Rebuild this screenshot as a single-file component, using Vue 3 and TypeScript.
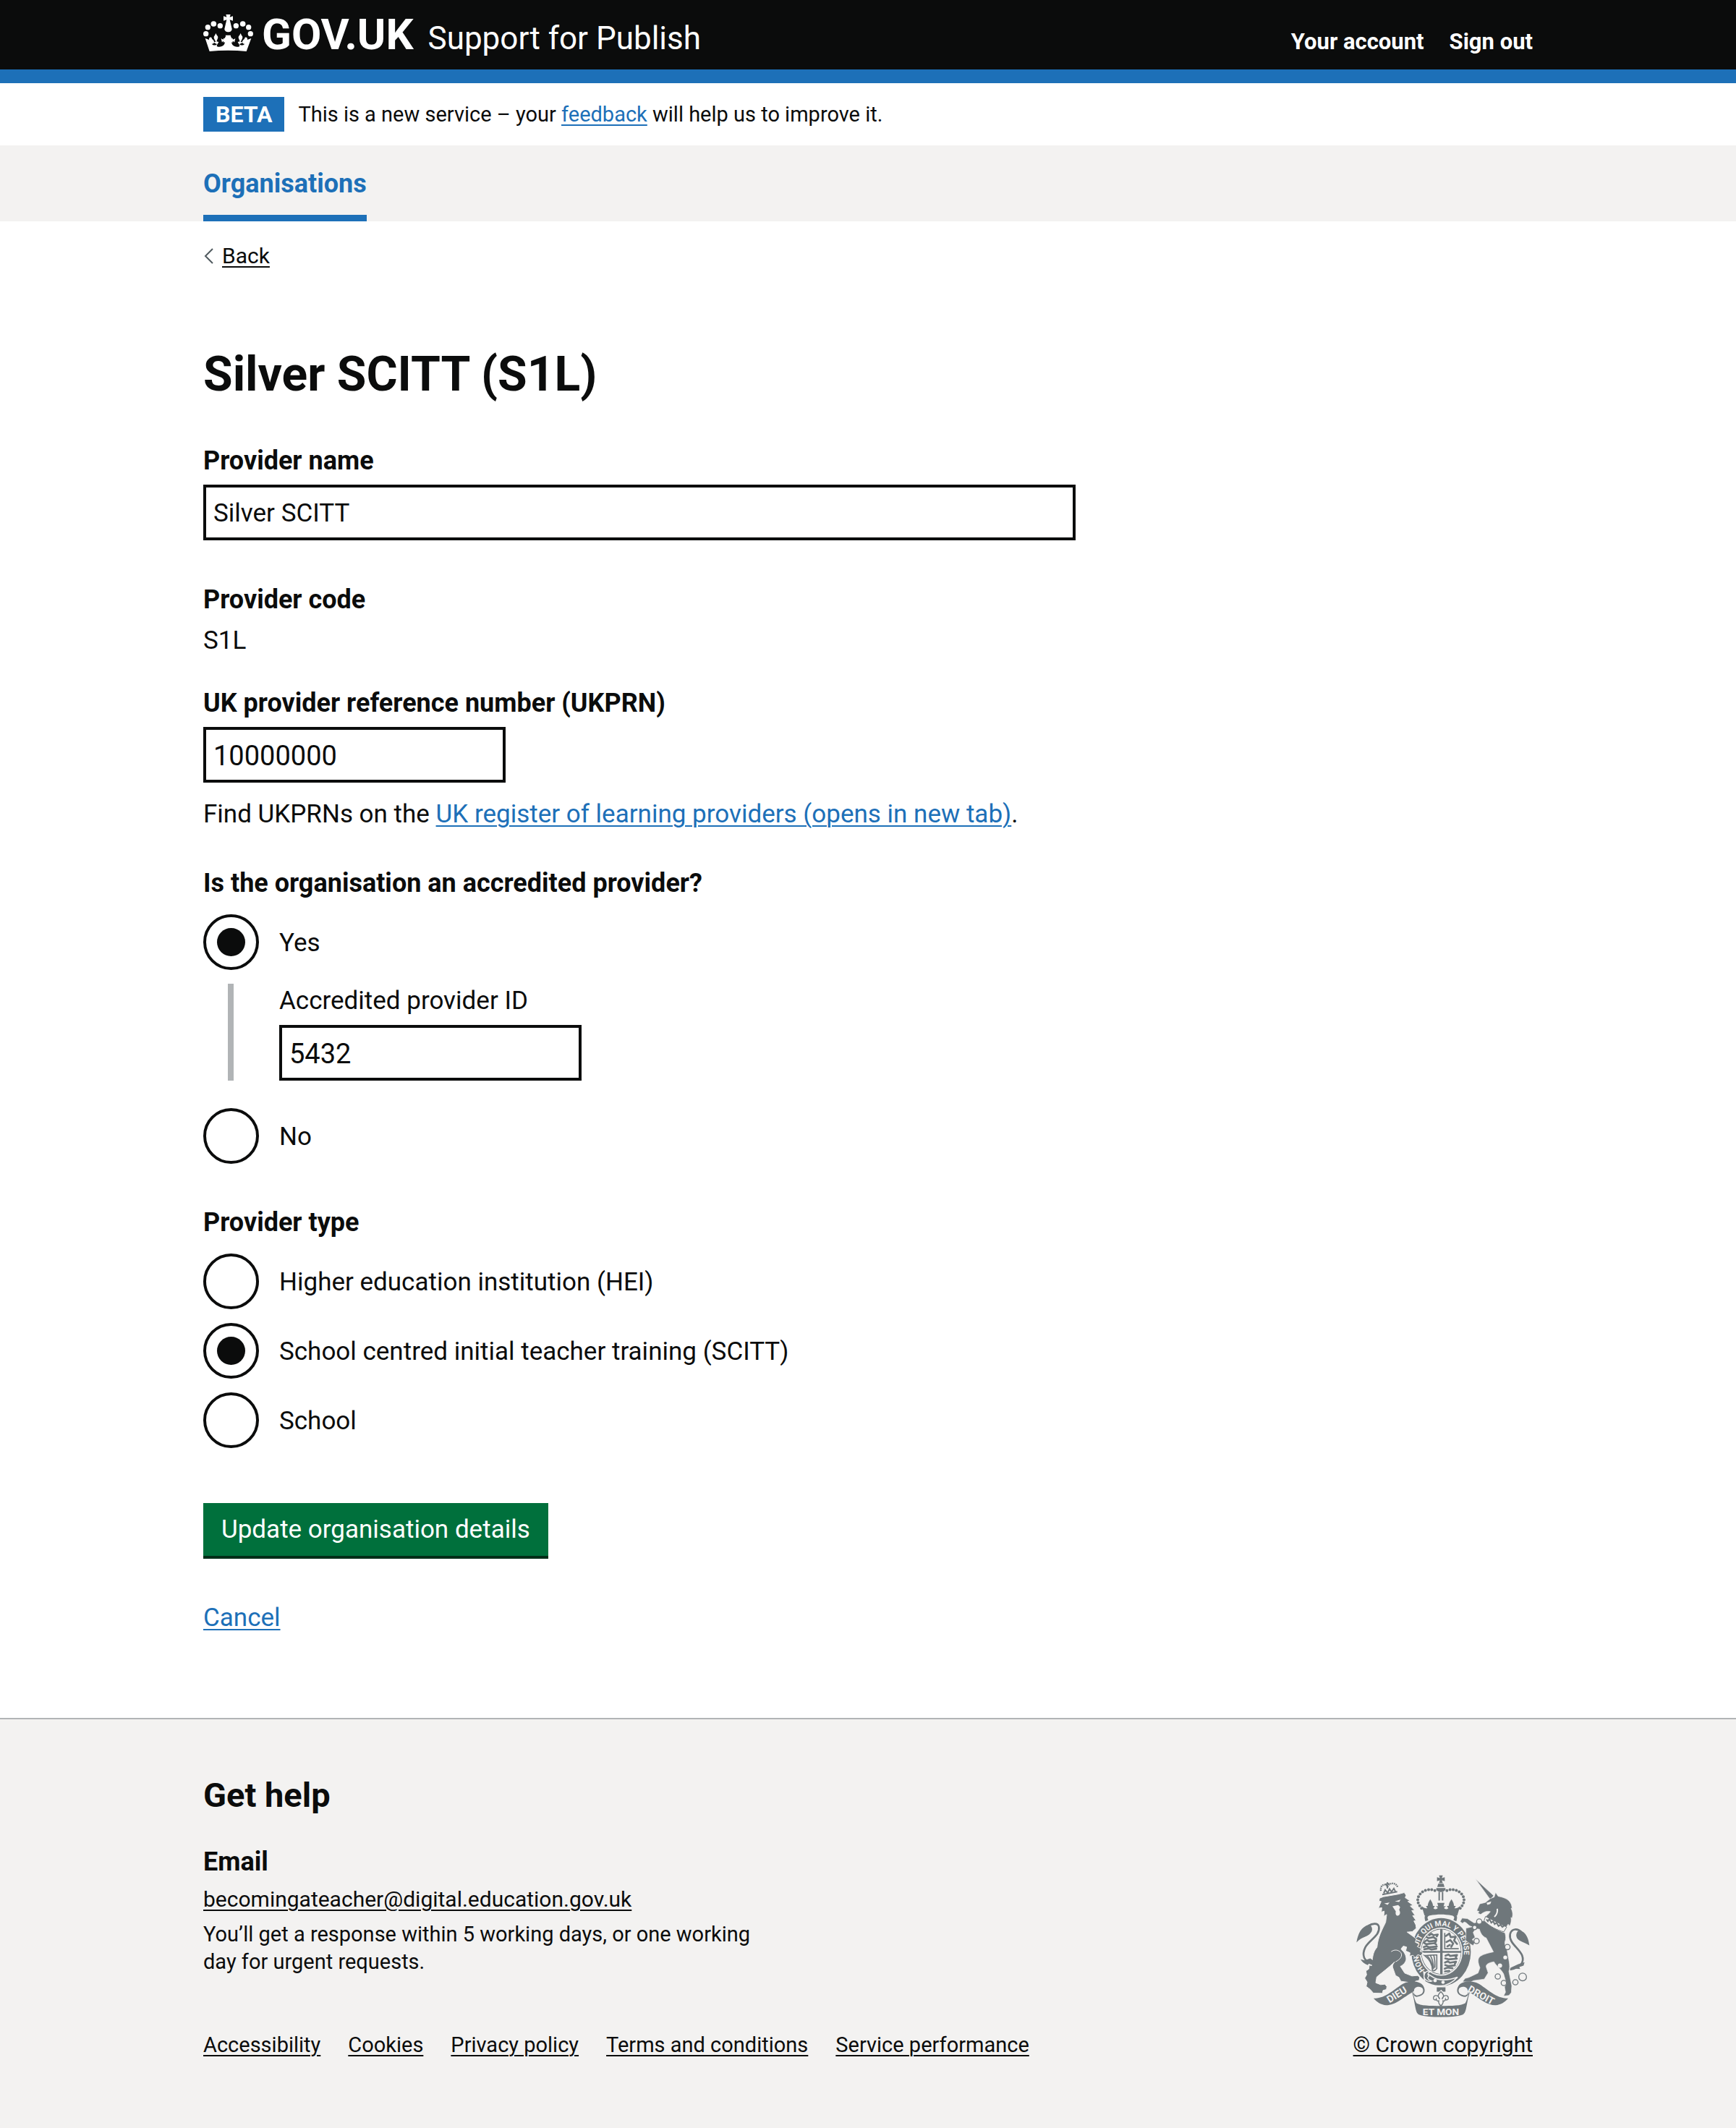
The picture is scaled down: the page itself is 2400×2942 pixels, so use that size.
<script setup lang="ts">
import { ref } from 'vue'

interface Option {
  value: string
  label: string
}

const providerName = ref('Silver SCITT')
const ukprn = ref('10000000')
const accredited = ref('yes')
const accreditedId = ref('5432')
const providerType = ref('scitt')

const providerTypes: Option[] = [
  { value: 'hei', label: 'Higher education institution (HEI)' },
  { value: 'scitt', label: 'School centred initial teacher training (SCITT)' },
  { value: 'school', label: 'School' }
]

const footerLinks = ['Accessibility', 'Cookies', 'Privacy policy', 'Terms and conditions', 'Service performance']

// Pearls along the arches of the crest's crown, one side; the other is mirrored about x = 377
const pearls: [number, number][] = [
  [352, 87], [339, 83], [326, 83], [313, 86], [301, 92], [291, 101], [284, 112], [281, 125], [283, 138], [289, 150], [297, 160]
]
const mirroredPearls = pearls.map(([x, y]) => [754 - x, y])
const crestPearls = [...pearls, ...mirroredPearls]

const chainRings: [number, number, number][] = [
  [536, 215, 11], [517, 240, 9], [525, 296, 11], [653, 321, 11], [613, 443, 11], [638, 470, 11], [686, 467, 11], [716, 445, 16]
]
</script>

<template>
  <div class="page">
    <header class="header">
      <div class="container header-row">
        <a class="logo" href="#">
          <svg class="crown" viewBox="0 0 207 153" aria-hidden="true">
            <g fill="#fff">
              <circle cx="11" cy="80" r="11" />
              <circle cx="19" cy="53" r="11" />
              <circle cx="43" cy="39" r="11.500" />
              <circle cx="70" cy="47" r="11" />
              <circle cx="196" cy="80" r="11" />
              <circle cx="188" cy="53" r="11" />
              <circle cx="164" cy="39" r="11.500" />
              <circle cx="136" cy="47" r="11" />
              <path d="M94 0h19l-3 11 13-4v19l-13-4 9 38c0 8-7 13-15 13s-16-5-16-13l9-38-13 4V7l13 4z" />
              <path d="M8 99l16 6c-1-7 3-12 9-10 2 1 3 3 3 6 5 4 9 8 9 13 0 6-5 9-10 8 6 7 17 8 22 1-4-2-10-3-13-8l8-2-6-11c-3-6-3-11 2-15l4-9 5 9c5 4 5 9 2 15l-4 10 9 2c-3 6-7 10-8 17 7 6 22 4 29-4 3-4 5-8 4-12-3-6-8-4-11 1l-4-16c4 2 8 5 13 2l8-15h17l8 15c5 3 9 0 13-2l-4 16c-3-5-8-7-11-1-1 4 1 8 4 12 7 8 22 10 29 4-1-7-5-11-8-17l9-2-4-10c-3-6-3-11 2-15l5-9 4 9c5 4 5 9 2 15l-6 11 8 2c-3 5-9 6-13 8 5 7 16 6 22-1-5 1-10-2-10-8 0-5 4-9 9-13 0-3 1-5 3-6 6-2 10 3 9 10l16-6-20 54c-50-5-103-5-153 0z" />
              <path d="M92 86h22l-6 17 14-5v18l-14-5 3 14H95l3-14-14 5V98l14 5z" />
            </g>
          </svg>
          <span class="wordmark">GOV.UK</span>
        </a>
        <a class="service" href="#">Support for Publish</a>
        <nav class="account" aria-label="Account">
          <a href="#">Your account</a>
          <a href="#">Sign out</a>
        </nav>
      </div>
    </header>

    <div class="container phase">
      <strong class="tag">BETA</strong>
      <span class="phase-text">This is a new service – your <a class="link" href="#">feedback</a> will help us to improve it.</span>
    </div>

    <nav class="primary" aria-label="Primary">
      <div class="container primary-row">
        <a class="primary-link" href="#" aria-current="page">Organisations</a>
      </div>
    </nav>

    <div class="container body">
      <a class="back" href="#">
        <svg class="chevron" viewBox="0 0 14 22" aria-hidden="true">
          <path d="M13 1L3 11l10 10" fill="none" stroke="#505a5f" stroke-width="2" />
        </svg>
        <span class="back-text">Back</span>
      </a>

      <main>
        <h1>Silver SCITT (S1L)</h1>

        <form @submit.prevent>
          <div class="field">
            <label class="label bold" for="provider-name">Provider name</label>
            <input id="provider-name" v-model="providerName" class="input wide" type="text" />
          </div>

          <div class="static">
            <h2 class="label bold">Provider code</h2>
            <p class="value">S1L</p>
          </div>

          <div class="field ukprn">
            <label class="label bold" for="ukprn">UK provider reference number (UKPRN)</label>
            <input id="ukprn" v-model="ukprn" class="input number" type="text" inputmode="numeric" />
            <p class="hint">
              Find UKPRNs on the <a class="link" href="#">UK register of learning providers (opens in new tab)</a>.
            </p>
          </div>

          <fieldset>
            <legend class="label bold">Is the organisation an accredited provider?</legend>
            <div class="radios">
              <div class="radio">
                <input id="accredited-yes" v-model="accredited" type="radio" name="accredited" value="yes" />
                <label for="accredited-yes">Yes</label>
              </div>
              <div v-if="accredited === 'yes'" class="conditional">
                <label class="label" for="accredited-id">Accredited provider ID</label>
                <input id="accredited-id" v-model="accreditedId" class="input number" type="text" inputmode="numeric" />
              </div>
              <div class="radio">
                <input id="accredited-no" v-model="accredited" type="radio" name="accredited" value="no" />
                <label for="accredited-no">No</label>
              </div>
            </div>
          </fieldset>

          <fieldset>
            <legend class="label bold">Provider type</legend>
            <div class="radios">
              <div v-for="option in providerTypes" :key="option.value" class="radio">
                <input :id="option.value" v-model="providerType" type="radio" name="type" :value="option.value" />
                <label :for="option.value">{{ option.label }}</label>
              </div>
            </div>
          </fieldset>

          <button class="submit" type="submit">Update organisation details</button>
        </form>

        <p class="cancel"><a class="link" href="#">Cancel</a></p>
      </main>
    </div>

    <footer class="footer">
      <div class="container footer-row">
        <div class="footer-main">
          <h2 class="help">Get help</h2>
          <h3 class="label bold">Email</h3>
          <a class="email" href="mailto:becomingateacher@digital.education.gov.uk">becomingateacher@digital.education.gov.uk</a>
          <p class="response">You’ll get a response within 5 working days, or one working day for urgent requests.</p>
          <ul class="footer-links">
            <li v-for="text in footerLinks" :key="text"><a href="#">{{ text }}</a></li>
          </ul>
        </div>
        <a class="copyright" href="#">
          <svg class="arms" viewBox="26 22 720 590" aria-hidden="true">
            <g fill="#6f777b">
              <!-- crown -->
              <path d="M369 24h16l-4 11 12-4v17l-12-4 4 12h-16l4-12-12 4V31l12 4z" />
              <path d="M366 58h22l4 14h-30z" />
              <path d="M358 76h38v6c-4 14-34 14-38 0z" />
              <path d="M367 92h6v36h-6zM381 92h6v36h-6z" />
              <circle v-for="(p, i) in crestPearls" :key="i" :cx="p[0]" :cy="p[1]" r="6" />
              <path d="M297 150c6 8 15 12 24 10l-6-9 8-1c-1-8 4-16 10-27 6 11 12 19 11 27l8 1-6 9c6 5 14 5 18-1l-8-8 10 1-4-14h30l-4 14 10-1-8 8c4 6 12 6 18 1l-6-9 8-1c-1-8 4-16 11-27 6 11 11 19 10 27l8 1-6 9c9 2 18-2 24-10l-12 40c-46-10-90-10-136 0z" />
              <path d="M313 214c-8-22 0-30 10-33 36-8 74-8 108 0 10 3 18 11 10 33l-12-5c7-13 2-17-6-19-32-6-60-6-92 0-8 2-13 6-6 19z" />
              <!-- garter -->
              <ellipse cx="378" cy="342" rx="123" ry="141" />
            </g>
            <ellipse cx="378" cy="340" rx="89" ry="100" fill="#f3f2f1" />
            <ellipse cx="378" cy="340" rx="84" ry="95" fill="#6f777b" />
            <path d="M374 248v89h-78c3-48 32-84 78-89zM384 248c46 5 73 41 76 89h-76zM296 345h78v88c-44-6-73-40-78-88zM384 345h76c-3 48-30 82-76 88z" fill="#f3f2f1" />
            <g fill="none" stroke="#6f777b" stroke-width="8" stroke-linecap="round" stroke-linejoin="round">
              <path d="M328 272l10-6 8 6 18-3-4 8M318 280l8 4 20-4 12 8M310 298l10-6 8 6 30-4-4 9M306 303l10 6 34-4 8 6M306 321l12-4 10 5 32-3M308 330l18-3 12 4 20-3" />
              <path d="M396 357l12-5 8 6 28-4-5 9M395 368l14 4 34-3M394 385l12-5 8 6 26-4-5 9M395 396l14 4 26-3M393 411l12-5 20 3M394 422l18-2" />
              <path d="M398 275l14-10 6 15 20-2-6 16 12 14M400 300l16-8 12 14-8 14M404 318l10-6" />
            </g>
            <g fill="none" stroke="#6f777b" stroke-width="5">
              <path d="M393 262v66h58" />
              <path d="M310 356c16 2 32-4 50-2v56c-6 8-14 10-18 8 0-30-14-48-32-62z" />
              <path d="M320 357c14 14 22 30 24 56M333 355c9 16 13 30 14 56M347 353c5 18 6 34 5 54" />
            </g>
            <!-- strap and pendant -->
            <path d="M306 424c24 8 34 24 56 30 28 6 56 2 84-8-40 44-94 46-136 18z" fill="#6f777b" stroke="#f3f2f1" stroke-width="5" />
            <path d="M335 422c-18-6-28 8-28 20s14 26 32 20c-18-6-20-14-12-20-8-8-4-16 8-20z" fill="#6f777b" stroke="#f3f2f1" stroke-width="4" />
            <circle cx="353" cy="460" r="7" fill="#f3f2f1" />
            <circle cx="386" cy="467" r="7" fill="#f3f2f1" />
            <path d="M360 488h36v18h-10l-8-8-8 8h-10z" fill="#6f777b" />
            <path d="M377 506c14 14 14 20 5 31 4-18 26-20 26-4 0 8-10 10-12 4-2 10-8 8-10 7v8l-4 8c-3 4-7 4-10 0l-4-8v-8c-2 1-8 3-10-7-2 6-12 4-12-4 0-16 22-14 26 4-9-11-9-17 5-31z" fill="#f3f2f1" stroke="#6f777b" stroke-width="4" />
            <g class="motto" fill="#f3f2f1">
              <path id="garter-arc" d="M311 418A95 108 0 1 1 445 418" fill="none" />
              <text><textPath href="#garter-arc" startOffset="2">HONI SOIT QUI MAL Y PENSE</textPath></text>
            </g>
            <!-- lion -->
            <g fill="#6f777b" stroke="#f3f2f1" stroke-width="3">
              <path d="M123 118l16-6 60-10 26-7 8 11-4 10 21 14-10 2 22 16-12 3 18 17-12 2 14 20-10 1 14 20-9 2 8 16 2 14-16 14-22 2 22 16 16 12-4 14 16 8-8 10 16 8-4 12 12 4-8 14-14-4-10 12-10-10-14 4 2-14-18-8 4-16-14-4c-6 8-10 10-8 14 14 12 20 26 20 40-1 14-14 26-24 30l18 28 30 12 24-2 8 8-2 12-16 4-6 12-18-2-8-6-28-4-8-16-14-8-12-34c-2-8 2-14 8-22-28 26-50 42-74 62l-4 24 20 8 18-2 8 10-2 12-14 4-2 12-38-1-14-16-16-12 4-18-10-16 8-14-3-16 12-8 2-16 10 2c4-28 2-54 22-76 4-44 22-74 36-104l4-32-12 8 2-22-12 4 2-18-14 2 11-28-9-2 6-28z" />
              <path d="M171 340c14-10 30-8 40 4 8 14-2 28-22 38" fill="none" />
            </g>
            <path d="M142 140l22-4-8 10zM186 132l24-8-6 10zM176 152l24-5 8 8-4 12c8 12 2 24-6 24s-10-8-8-18z" fill="#f3f2f1" />
            <path d="M92 389c-34-8-45-34-28-68 18-32 62-48 56-84-4-18-28-14-44-4" fill="none" stroke="#6f777b" stroke-width="8" />
            <path d="M27 302c6-34 18-66 54-74 8 4 14 18 9 28-12 24-38 18-63 46zM44 372l16 4 24-8 22 16-12 4 4 10-20-8-4 6c-12-4-24-12-30-24z" fill="#6f777b" />
            <g fill="none" stroke="#6f777b">
              <path d="M128 88c-4-24 18-34 28-18 8-18 36-18 42 4" stroke-dasharray="5 3" stroke-width="7" />
              <path d="M134 103l62-12M140 98l6-14 10 12 8-16 8 12 10-14 6 12M155 52v26M146 61l18-3" stroke-width="6" />
            </g>
            <!-- unicorn -->
            <g fill="#6f777b" stroke="#f3f2f1" stroke-width="2">
              <path d="M520 38l76 70-14 16z" />
              <path d="M562 136l20-16 16-6 6-20 10 16 16 4c30 8 42 26 42 48l-4-2c8 16 8 28 4 42l-4-4c2 14 0 26-6 36l-6-8-8 12-76-26-10-14c4-10 16-16 20-24-16-4-28 2-40 12l-12-6 6-6-10-4 12-28z" />
              <path d="M557 212c30 24 58 42 86 50 4 16 4 26 0 36-4 14 8 28 10 44 4 30 14 56 6 80l12 60-2 28-10 12-22 2 8-16-4-22 8-12-12-42c-12-22-32-34-40-50-22 4-34 10-32 22l8 24-16 26-44 6-12 6-34-1 10-14 16-4 38-18 8-22c-8-20-12-38 2-48 14-10 38-14 54-18l-30-58c-16-6-24-20-28-36l-16-2-10 16 8 20-12 8 10 14-6 12-14-8-18-14 2-14 0-20 0-16 26-6c-18-4-22-20-34-20l-6 6-10-8 8-14 22 2 28 18 32-8z" />
            </g>
            <path d="M562 194l88 44-12 20c-30-8-58-22-82-46z" fill="#f3f2f1" stroke="#6f777b" stroke-width="3" />
            <path d="M566 206l6 8 6-10 8 16 8-6 6 12 8-6 8 14 8-6 8 10 8-6" fill="none" stroke="#6f777b" stroke-width="6" />
            <path d="M566 138l20-6-4 10-12 4z" fill="#f3f2f1" />
            <path d="M611 162c2 14-2 24-12 34" fill="none" stroke="#f3f2f1" stroke-width="6" />
            <path d="M664 414c44-8 60-30 50-58-14-32-56-52-50-88 6-26 32-24 46-10" fill="none" stroke="#6f777b" stroke-width="8" />
            <path d="M744 314c-26-16-50-16-54-38-1-12 4-22 14-26 28 12 36 34 40 64zM664 408l34-16 26-8-4 14-18 6 4 8-24-2z" fill="#6f777b" />
            <circle v-for="(r, i) in chainRings" :key="'r' + i" :cx="r[0]" :cy="r[1]" :r="r[2]" fill="#f3f2f1" stroke="#6f777b" stroke-width="4" />
            <circle cx="644" cy="364" r="8" fill="#f3f2f1" />
            <circle cx="622" cy="398" r="9" fill="#f3f2f1" />
            <!-- ribbon: one half is drawn and mirrored -->
            <g id="ribbon">
              <path d="M98 534C150 534 186 492 222 472C250 460 290 460 304 482C318 506 306 524 276 528C262 524 260 512 268 502C214 534 190 562 150 562C130 562 112 550 98 534z" fill="#6f777b" />
              <path d="M254 500C266 512 262 528 276 554C292 564 330 565 378 565V611C340 611 310 609 286 601C268 593 272 546 254 500z" fill="#6f777b" />
              <path d="M266 500C266 484 294 480 302 494C308 510 296 520 276 522C262 516 264 508 266 500z" fill="#f3f2f1" />
            </g>
            <use href="#ribbon" transform="translate(754 0) scale(-1 1)" />
            <g class="scroll" fill="#f3f2f1">
              <text x="377" y="603" text-anchor="middle">ET MON</text>
              <text transform="translate(164 554) rotate(-32)">DIEU</text>
              <text transform="translate(486 504) rotate(29)">DROIT</text>
            </g>
          </svg>
          <span class="copyright-text">© Crown copyright</span>
        </a>
      </div>
    </footer>
  </div>
</template>

<style>
body {
  background: #f3f2f1;
}
</style>

<style scoped>
.page {
  background: #fff;
  color: #0b0c0c;
  font-family: Roboto, "Liberation Sans", sans-serif;
  font-size: 35px;
  line-height: 48px;
}

.page *,
.page *::before,
.page *::after {
  box-sizing: border-box;
}

h1,
h2,
h3,
p,
ul,
fieldset,
legend {
  margin: 0;
  padding: 0;
  border: 0;
}

a {
  color: inherit;
  text-decoration-thickness: 2px;
  text-underline-offset: 4px;
}

.link {
  color: #1d70b8;
}

.container {
  width: calc(100% - 60px);
  max-width: 1838px;
  margin: 0 auto;
}

/* Header */
.header {
  background: #0b0c0c;
  border-bottom: 19px solid #1d70b8;
  color: #fff;
}

.header a {
  text-decoration: none;
}

.header-row {
  display: flex;
  align-items: baseline;
  min-height: 96px;
  padding-top: 19px;
}

.logo {
  display: flex;
  align-items: baseline;
  gap: 12px;
  margin-right: 20px;
}

.crown {
  width: 69px;
  height: 51px;
  margin-top: 1px;
  align-self: flex-start;
}

.wordmark {
  font-size: 60px;
  font-weight: 700;
  line-height: 58px;
}

.service {
  font-size: 44px;
}

.account {
  display: flex;
  gap: 35px;
  margin-left: auto;
  font-size: 31px;
  font-weight: 700;
}

/* Phase banner */
.phase {
  display: flex;
  align-items: center;
  gap: 19px;
  padding: 19px 0;
}

.tag {
  padding: 0 17px;
  background: #1d70b8;
  color: #fff;
  font-size: 32px;
}

.phase-text {
  font-size: 29px;
}

/* Primary navigation */
.primary {
  background: #f3f2f1;
}

.primary-row {
  display: flex;
}

.primary-link {
  padding: 29px 0 19px;
  border-bottom: 9px solid #1d70b8;
  color: #1d70b8;
  font-size: 36px;
  font-weight: 700;
  text-decoration: none;
}

/* Page body */
.body {
  padding: 29px 0 114px;
}

.back {
  display: flex;
  align-items: center;
  gap: 12px;
  width: fit-content;
  font-size: 30px;
  line-height: 38px;
  text-decoration: none;
}

.chevron {
  width: 14px;
  height: 22px;
}

.back-text {
  text-decoration: underline;
  text-decoration-thickness: 2px;
  text-underline-offset: 4px;
}

main {
  padding-top: 97px;
}

h1 {
  font-size: 66px;
  line-height: 96px;
}

form {
  padding-top: 47px;
}

.label {
  display: block;
}

.bold {
  font-size: 36px;
  font-weight: 700;
}

.field {
  margin-bottom: 58px;
}

.ukprn {
  margin-bottom: 47px;
}

.input {
  display: block;
  width: 100%;
  height: 77px;
  margin-top: 9px;
  padding: 2px 10px 0;
  border: 4px solid #0b0c0c;
  border-radius: 0;
  background: #fff;
  color: #0b0c0c;
  font-family: inherit;
  font-size: 35px;
}

.wide {
  max-width: 1206px;
}

.number {
  max-width: 418px;
  font-size: 38px;
}

.static {
  margin-bottom: 38px;
}

.value {
  margin-top: 9px;
}

.hint {
  margin-top: 20px;
}

fieldset {
  min-width: 0;
  margin-bottom: 57px;
}

.radios {
  display: flex;
  flex-direction: column;
  gap: 19px;
  padding-top: 19px;
}

.radio {
  display: flex;
  align-items: center;
}

.radio input {
  display: grid;
  place-items: center;
  flex: none;
  width: 77px;
  height: 77px;
  margin: 0;
  border: 4px solid #0b0c0c;
  border-radius: 50%;
  background: #fff;
  appearance: none;
}

.radio input:checked::before {
  width: 39px;
  height: 39px;
  border-radius: 50%;
  background: #0b0c0c;
  content: "";
}

.radio label {
  padding: 2px 28px 0;
}

.conditional {
  margin: 0 0 19px 34px;
  padding-left: 63px;
  border-left: 8px solid #b1b4b6;
}

.submit {
  display: block;
  height: 77px;
  margin-top: 76px;
  padding: 0 25px;
  border: 0;
  border-bottom: 4px solid #002d18;
  background: #00703c;
  color: #fff;
  font-family: inherit;
  font-size: 35px;
}

.cancel {
  margin-top: 58px;
}

/* Footer */
.footer {
  border-top: 2px solid #b1b4b6;
  background: #f3f2f1;
}

.footer-row {
  display: flex;
  align-items: flex-end;
  justify-content: space-between;
  padding: 76px 0 96px;
}

.help {
  margin-bottom: 39px;
  font-size: 47px;
  line-height: 58px;
}

.email {
  display: block;
  width: fit-content;
  margin-top: 9px;
  font-size: 30px;
  line-height: 38px;
}

.response {
  max-width: 800px;
  margin-top: 10px;
  font-size: 29px;
  line-height: 38px;
}

.footer-links {
  display: flex;
  flex-wrap: wrap;
  gap: 10px 38px;
  margin-top: 77px;
  font-size: 29px;
  line-height: 38px;
  list-style: none;
}

.copyright {
  display: flex;
  flex-direction: column;
  align-items: center;
  gap: 19px;
  font-size: 30px;
  line-height: 38px;
}

.arms {
  width: 240px;
  height: 197px;
  overflow: visible;
}

.motto text {
  font-size: 31px;
  font-weight: 700;
}

.scroll text {
  font-size: 41px;
  font-weight: 700;
}
</style>
